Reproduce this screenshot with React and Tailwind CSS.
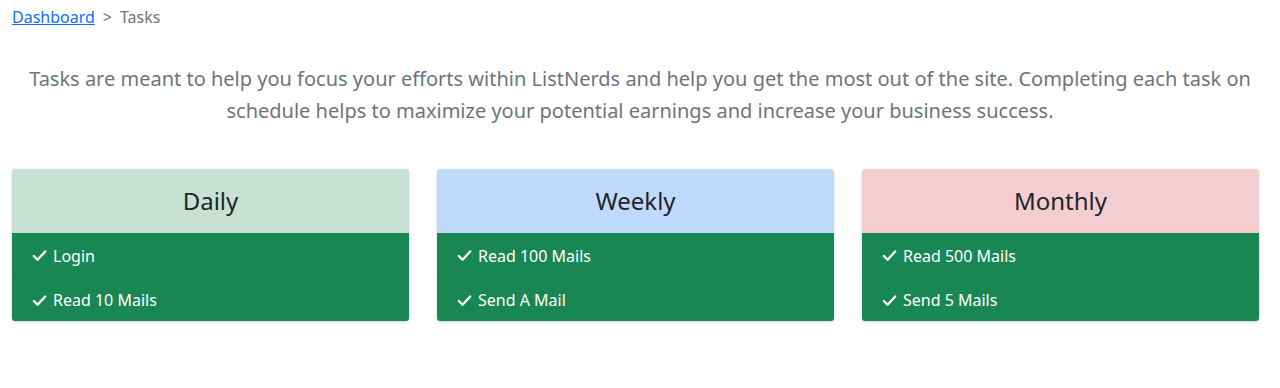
import React from 'react';

const groups = [
    { title: 'Daily', head: 'bg-[#c7e2d5]', tasks: ['Login', 'Read 10 Mails'] },
    { title: 'Weekly', head: 'bg-[#c0dafd]', tasks: ['Read 100 Mails', 'Send A Mail'] },
    { title: 'Monthly', head: 'bg-[#f4cdd0]', tasks: ['Read 500 Mails', 'Send 5 Mails'] }
];

function Check() {
    return (
        <svg width="15" height="13" viewBox="0 0 15 13" fill="none" stroke="currentColor" strokeWidth="2.3" strokeLinecap="round" strokeLinejoin="round" className="shrink-0">
            <polyline points="1.8,7 5.6,10.8 13.2,2.4" />
        </svg>
    );
}

export default function App() {
    return (
        <div className="min-h-screen bg-white font-['Noto_Sans','Open_Sans',sans-serif] text-[#212529]">

            {/* breadcrumb */}
            <nav className="px-3 pt-2 text-base flex items-center gap-2 h-[26px]">
                <a href="#" className="text-[#0d6efd] underline">Dashboard</a>
                <span className="text-[#6c757d]">&gt;</span>
                <span className="text-[#6c757d]">Tasks</span>
            </nav>

            {/* intro */}
            <p className="mt-[37px] px-6 text-center text-[20px] leading-[31.5px] text-[#6c757d]">
                Tasks are meant to help you focus your efforts within ListNerds and help you get the most out of the site. Completing each task on schedule helps to maximize your potential earnings and increase your business success.
            </p>

            {/* task cards */}
            <div className="mt-[43px] pl-3 pr-[21px] grid grid-cols-3 gap-[28px]">
                {groups.map((g) => (
                    <div key={g.title} className="rounded-[3px] overflow-hidden shadow-[0_1px_3px_rgba(0,0,0,0.18)]">
                        <div className={`${g.head} h-[64px] flex items-center justify-center text-[24px] text-[#212529]`}>
                            {g.title}
                        </div>
                        {g.tasks.map((t, i) => (
                            <div
                                key={t}
                                className={`bg-[#198754] text-white text-base flex items-center gap-[6px] px-5 ${i > 0 ? 'h-[43px] border-t border-[#17804f]' : 'h-[45px]'}`}
                            >
                                <Check /> {t}
                            </div>
                        ))}
                    </div>
                ))}
            </div>
        </div>
    );
}
